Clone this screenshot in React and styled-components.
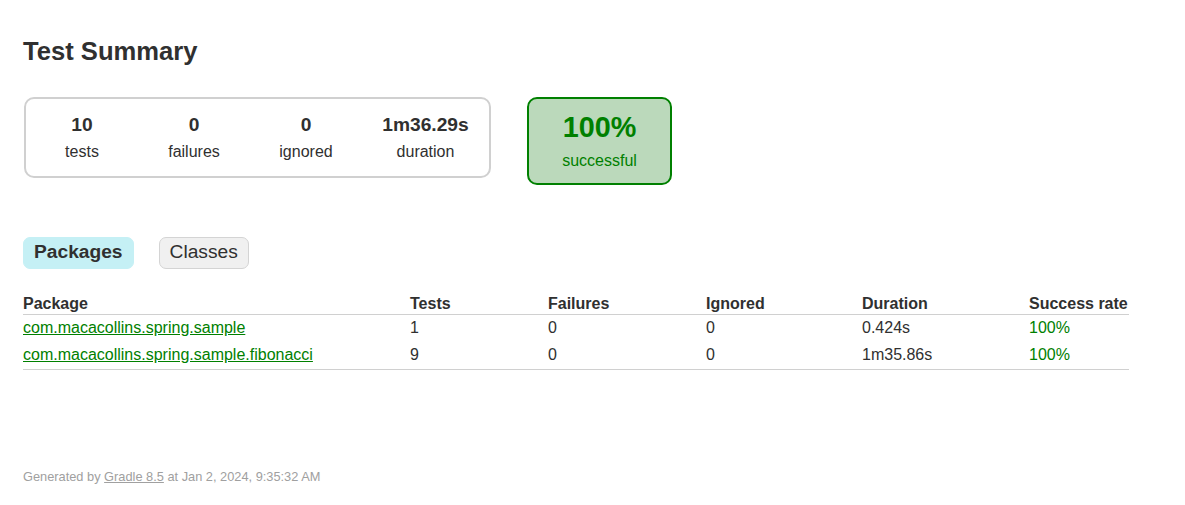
import React from "react";
import styled, { createGlobalStyle } from "styled-components";

const GlobalStyle = createGlobalStyle`
  html, body {
    margin: 0;
    padding: 0;
    background: #ffffff;
  }
  body {
    font-family: "Liberation Sans", Arial, sans-serif;
    font-size: 16px;
    color: #303030;
  }
`;

const Content = styled.div`
  padding: 37px 23px 0;
`;

const Title = styled.h1`
  margin: 0;
  font-size: 25.6px;
  line-height: 29px;
  font-weight: bold;
  white-space: nowrap;
`;

const SummaryRow = styled.div`
  display: flex;
  align-items: flex-start;
  margin-top: 31px;
`;

const SummaryGroup = styled.div`
  display: flex;
  margin-left: 1px;
  border: solid 2px #d0d0d0;
  border-radius: 10px;
`;

const InfoBox = styled.div`
  width: ${(p) => p.$width || 112}px;
  padding: 15px 0 15px;
  text-align: center;
`;

const Counter = styled.p`
  margin: 0 0 7px;
  font-size: 19.2px;
  line-height: 22px;
  font-weight: bold;
`;

const Label = styled.p`
  margin: 0;
  line-height: 18px;
`;

const SuccessRate = styled.div`
  width: 141px;
  margin-left: 36px;
  padding: 14px 0 13px;
  text-align: center;
  color: #008000;
  background-color: #bbd9bb;
  border: solid 2px #008000;
  border-radius: 10px;
`;

const Percent = styled.p`
  margin: 0 0 10px;
  font-size: 28.8px;
  line-height: 29px;
  font-weight: bold;
`;

const TabLinks = styled.ul`
  display: flex;
  margin: 52px 0 0;
  padding: 0;
  list-style: none;
`;

const Tab = styled.li`
  margin-right: 25px;
  padding: 4px 10px 6px;
  border-radius: 7px;
  border: solid 1px ${(p) => (p.$selected ? "#c5f0f5" : "#d4d4d4")};
  background-color: ${(p) => (p.$selected ? "#c5f0f5" : "#f0f0f0")};
  font-size: 19.2px;
  line-height: 20px;
  font-weight: ${(p) => (p.$selected ? "bold" : "normal")};
  cursor: pointer;
`;

const Table = styled.table`
  margin-top: 26px;
  width: 1106px;
  table-layout: fixed;
  border-collapse: collapse;
  border-bottom: solid #d0d0d0 1px;
`;

const Th = styled.th`
  width: ${(p) => p.$width}px;
  padding: 0 0 1px;
  text-align: left;
  white-space: nowrap;
  line-height: 18px;
  font-weight: bold;
  border-bottom: solid #d0d0d0 1px;
`;

const Td = styled.td`
  padding: 4px 0 6px;
  line-height: 17px;
  white-space: nowrap;
  color: ${(p) => (p.$success ? "#008000" : "#303030")};
`;

const PackageLink = styled.a`
  color: #008000;
  text-decoration: underline;
`;

const Footer = styled.div`
  margin-top: 99px;
  font-size: 12.8px;
  line-height: 15px;
  color: #a0a0a0;
  white-space: nowrap;

  a {
    color: #a0a0a0;
  }
`;

const counters = [
  { value: "10", label: "tests" },
  { value: "0", label: "failures" },
  { value: "0", label: "ignored" },
  { value: "1m36.29s", label: "duration", width: 127 },
];

const columns = [
  { name: "Package", width: 387 },
  { name: "Tests", width: 138 },
  { name: "Failures", width: 158 },
  { name: "Ignored", width: 156 },
  { name: "Duration", width: 167 },
  { name: "Success rate", width: 100 },
];

const packages = [
  { name: "com.macacollins.spring.sample", tests: 1, failures: 0, ignored: 0, duration: "0.424s", rate: "100%" },
  { name: "com.macacollins.spring.sample.fibonacci", tests: 9, failures: 0, ignored: 0, duration: "1m35.86s", rate: "100%" },
];

export default function App() {
  return (
    <>
      <GlobalStyle />
      <Content>
        <Title>Test Summary</Title>

        <SummaryRow>
          <SummaryGroup>
            {counters.map((c) => (
              <InfoBox key={c.label} $width={c.width}>
                <Counter>{c.value}</Counter>
                <Label>{c.label}</Label>
              </InfoBox>
            ))}
          </SummaryGroup>
          <SuccessRate>
            <Percent>100%</Percent>
            <Label>successful</Label>
          </SuccessRate>
        </SummaryRow>

        <TabLinks>
          <Tab $selected>Packages</Tab>
          <Tab>Classes</Tab>
        </TabLinks>

        <Table>
          <thead>
            <tr>
              {columns.map((col) => (
                <Th key={col.name} $width={col.width}>
                  {col.name}
                </Th>
              ))}
            </tr>
          </thead>
          <tbody>
            {packages.map((p) => (
              <tr key={p.name}>
                <Td>
                  <PackageLink href="#">{p.name}</PackageLink>
                </Td>
                <Td>{p.tests}</Td>
                <Td>{p.failures}</Td>
                <Td>{p.ignored}</Td>
                <Td>{p.duration}</Td>
                <Td $success>{p.rate}</Td>
              </tr>
            ))}
          </tbody>
        </Table>

        <Footer>
          Generated by <a href="#">Gradle 8.5</a> at Jan 2, 2024, 9:35:32 AM
        </Footer>
      </Content>
    </>
  );
}
